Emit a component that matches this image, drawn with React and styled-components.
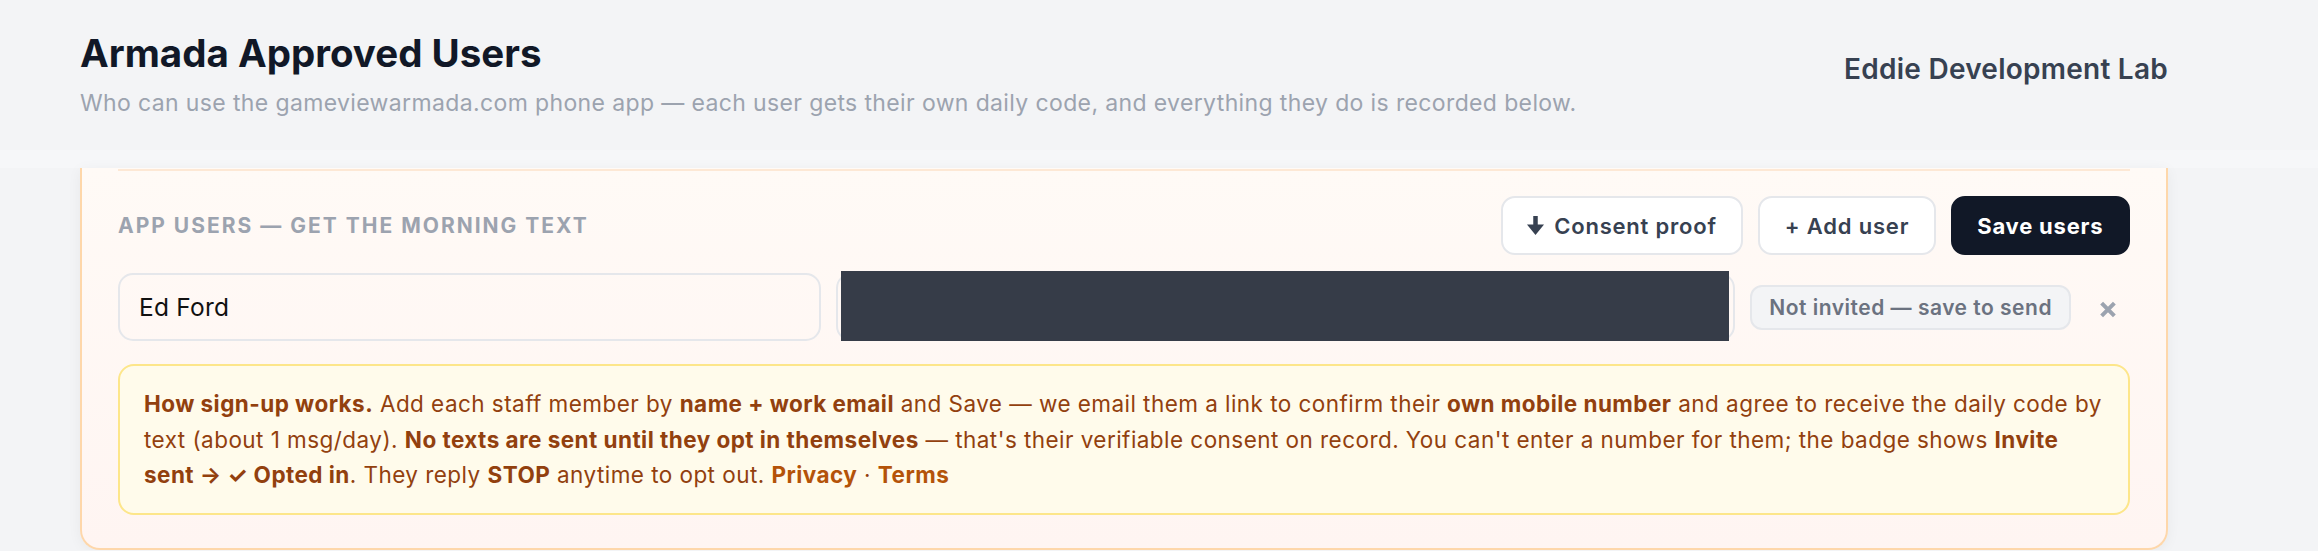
import styled, { createGlobalStyle } from "styled-components";

const GlobalStyle = createGlobalStyle`
  html, body {
    margin: 0;
    padding: 0;
    background: #f3f4f6;
    font-family: Inter, "Noto Sans", "DejaVu Sans", sans-serif;
    -webkit-font-smoothing: antialiased;
  }
  * { box-sizing: border-box; }
`;

const users = [{ name: "Ed Ford", status: "Not invited — save to send" }];

function DownArrow() {
  return (
    <svg width="17" height="19" viewBox="0 0 17 19" aria-hidden="true">
      <rect x="6.25" y="0" width="4.5" height="11" fill="currentColor" />
      <polygon points="0,8.5 17,8.5 8.5,19" fill="currentColor" />
    </svg>
  );
}

function CrossIcon() {
  return (
    <svg width="18" height="17" viewBox="0 0 16 16" aria-hidden="true">
      <path d="M2 2 L14 14 M14 2 L2 14" stroke="currentColor" strokeWidth="3.8" />
    </svg>
  );
}

function App() {
  return (
    <>
      <GlobalStyle />
      <Header>
        <HeaderInner>
          <div>
            <Title>Armada Approved Users</Title>
            <Subtitle>
              Who can use the gameviewarmada.com phone app — each user gets their own daily code, and
              everything they do is recorded below.
            </Subtitle>
          </div>
          <OrgName>Eddie Development Lab</OrgName>
        </HeaderInner>
      </Header>
      <HeaderFade />
      <Card>
        <Divider />
        <Toolbar>
          <SectionLabel>App users — get the morning text</SectionLabel>
          <Actions>
            <Button>
              <DownArrow /> Consent proof
            </Button>
            <Button>+ Add user</Button>
            <Button $primary>Save users</Button>
          </Actions>
        </Toolbar>
        {users.map((u) => (
          <UserRow key={u.name}>
            <Field defaultValue={u.name} />
            <EmailWrap>
              <Field defaultValue="" />
              <Redaction />
            </EmailWrap>
            <Badge>{u.status}</Badge>
            <RemoveButton aria-label="Remove user">
              <CrossIcon />
            </RemoveButton>
          </UserRow>
        ))}
        <Notice>
          <strong>How sign-up works.</strong> Add each staff member by <strong>name + work email</strong> and
          Save — we email them a link to confirm their <strong>own mobile number</strong> and agree to receive
          the daily code by
          <br />
          text (about 1 msg/day). <strong>No texts are sent until they opt in themselves</strong> — that's
          their verifiable consent on record. You can't enter a number for them; the badge shows{" "}
          <strong>Invite</strong>
          <br />
          <strong>sent → ✓ Opted in</strong>. They reply <strong>STOP</strong> anytime to opt out.{" "}
          <Link href="#">Privacy</Link> · <Link href="#">Terms</Link>
        </Notice>
      </Card>
    </>
  );
}

const Header = styled.header`
  background: #f3f4f6;
  height: 150px;
  padding: 30px 0 0 80px;
`;

const HeaderInner = styled.div`
  width: 2088px;
  display: flex;
  align-items: center;
  justify-content: space-between;
`;

const Title = styled.h1`
  margin: 0;
  font-size: 38.5px;
  line-height: 46px;
  font-weight: 700;
  color: #111827;
`;

const Subtitle = styled.p`
  margin: 12px 0 0;
  font-size: 23px;
  line-height: 30px;
  letter-spacing: 0.37px;
  color: #9ca3af;
`;

const OrgName = styled.div`
  font-size: 28px;
  font-weight: 600;
  letter-spacing: 0.25px;
  color: #374151;
  margin-top: -10px;
`;

const HeaderFade = styled.div`
  height: 18px;
  background: #f6f7f9;
`;

const Card = styled.section`
  margin-left: 80px;
  width: 2088px;
  border: 2px solid #fed7aa;
  border-top: none;
  border-radius: 0 0 20px 20px;
  background: linear-gradient(180deg, #fffaf6 0%, #fff5f2 100%);
  box-shadow: 0 2px 14px rgba(17, 24, 39, 0.05);
  padding: 1px 36px 33px;
`;

const Divider = styled.div`
  height: 2px;
  background: #fde8d5;
`;

const Toolbar = styled.div`
  display: flex;
  align-items: center;
  justify-content: space-between;
  margin-top: 25px;
`;

const SectionLabel = styled.h2`
  margin: 0;
  font-size: 21px;
  font-weight: 700;
  letter-spacing: 2px;
  text-transform: uppercase;
  color: #9ca3af;
`;

const Actions = styled.div`
  display: flex;
  gap: 15px;
`;

const Button = styled.button`
  height: 59px;
  padding: 0 24.5px;
  display: inline-flex;
  align-items: center;
  gap: 10px;
  border-radius: 14px;
  border: 2.5px solid ${(p) => (p.$primary ? "#111827" : "#e5e7eb")};
  background: ${(p) => (p.$primary ? "#111827" : "#ffffff")};
  color: ${(p) => (p.$primary ? "#ffffff" : "#374151")};
  font-family: inherit;
  font-size: 22px;
  letter-spacing: 0.8px;
  font-weight: ${(p) => (p.$primary ? 700 : 600)};
  cursor: pointer;
`;

const UserRow = styled.div`
  display: flex;
  align-items: center;
  gap: 15px;
  margin-top: 18px;
`;

const Field = styled.input`
  width: 100%;
  height: 68px;
  padding: 0 19px;
  border: 2.5px solid #e5e7eb;
  border-radius: 15px;
  background: transparent;
  font-family: inherit;
  font-size: 24.5px;
  letter-spacing: 0.25px;
  color: #111111;
  outline: none;
  flex: 0 0 703px;
`;

const EmailWrap = styled.div`
  position: relative;
  flex: 1;
  display: flex;

  ${Field} {
    flex: 1;
  }
`;

const Redaction = styled.div`
  position: absolute;
  top: -2px;
  bottom: 0;
  left: 5px;
  right: 6px;
  background: #363c48;
`;

const Badge = styled.span`
  height: 45px;
  padding: 0 17px;
  display: inline-flex;
  align-items: center;
  border-radius: 12px;
  border: 2px solid #e5e7eb;
  background: #f3f4f6;
  color: #6b7280;
  font-size: 21px;
  letter-spacing: 0.5px;
  font-weight: 600;
  white-space: nowrap;
`;

const RemoveButton = styled.button`
  width: 44px;
  height: 44px;
  display: inline-flex;
  align-items: center;
  justify-content: center;
  border: none;
  background: none;
  color: #9ca3af;
  padding: 0;
  margin-top: 4px;
  cursor: pointer;
`;

const Notice = styled.p`
  margin: 23px 0 0;
  padding: 20px 24px;
  border: 2px solid #fde68a;
  border-radius: 16px;
  background: #fffbeb;
  color: #92400e;
  font-size: 22.5px;
  letter-spacing: 0.45px;
  line-height: 35.5px;
  white-space: nowrap;

  strong {
    font-weight: 700;
  }
`;

const Link = styled.a`
  color: #b45309;
  font-weight: 700;
  text-decoration: none;
`;

export default App;
